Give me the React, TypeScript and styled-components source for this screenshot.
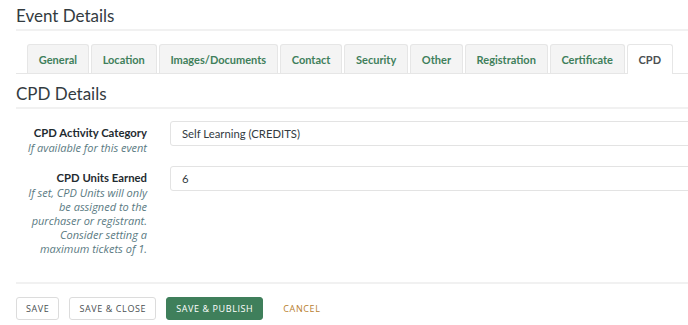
import React from "react";
import styled, { createGlobalStyle } from "styled-components";

const COLORS = {
  green: "#3f7f5b",
  text: "#333b3f",
  label: "#1f2b30",
  hint: "#5a7a82",
  line: "#f1f1f1",
  tabBg: "#f4f4f4",
  tabBorder: "#e6e6e6",
  inputBorder: "#e3e3e3",
  cancel: "#b8802f",
};

const GlobalStyle = createGlobalStyle`
  body {
    margin: 0;
    background: #ffffff;
    font-family: Lato, "Noto Sans", sans-serif;
    color: ${COLORS.text};
    overflow: hidden;
  }
`;

const Page = styled.div`
  width: 740px;
  padding: 0 0 0 16px;
  box-sizing: border-box;
`;

const SectionTitle = styled.h2<{ $top: number }>`
  margin: 0;
  font-size: 17px;
  font-weight: 400;
  line-height: 22px;
  color: ${COLORS.text};
  padding: ${(p) => p.$top}px 0 2px;
  border-bottom: 2px solid ${COLORS.line};
`;

const TabBar = styled.div`
  display: flex;
  gap: 2px;
  margin-top: 13px;
  padding-left: 11px;
  border-bottom: 1px solid ${COLORS.tabBorder};
`;

const Tab = styled.div<{ $active?: boolean }>`
  padding: 0 10.8px;
  display: flex;
  align-items: center;
  font-size: 11px;
  font-weight: 700;
  color: ${(p) => (p.$active ? "#4a4f52" : COLORS.green)};
  background: ${(p) => (p.$active ? "#ffffff" : COLORS.tabBg)};
  border: 1px solid ${COLORS.tabBorder};
  border-bottom: none;
  border-radius: 3px 3px 0 0;
  margin-bottom: ${(p) => (p.$active ? "-1px" : "0")};
  height: ${(p) => (p.$active ? "29px" : "28px")};
`;

const Form = styled.div`
  display: flex;
  flex-direction: column;
  gap: 11px;
  padding: 12px 0 26px;
  border-bottom: 2px solid ${COLORS.line};
`;

const Row = styled.div`
  display: grid;
  grid-template-columns: 131px 1fr;
  column-gap: 23px;
  align-items: start;
`;

const LabelCol = styled.div`
  text-align: right;
  padding-top: 5px;
`;

const Label = styled.div`
  font-size: 11.3px;
  font-weight: 700;
  color: ${COLORS.label};
  line-height: 14px;
`;

const Hint = styled.div`
  font-family: "Open Sans", sans-serif;
  font-size: 11px;
  font-style: italic;
  color: ${COLORS.hint};
  line-height: 14px;
  margin-top: 1px;
`;

const Field = styled.div`
  height: 25px;
  box-sizing: border-box;
  border: 1px solid ${COLORS.inputBorder};
  border-radius: 3px;
  padding: 0 11px;
  display: flex;
  align-items: center;
  font-size: 11.3px;
  color: ${COLORS.text};
`;

const Actions = styled.div`
  display: flex;
  align-items: center;
  gap: 10px;
  padding-top: 13px;
`;

const Button = styled.div<{ $variant?: "primary" | "link" }>`
  height: 23px;
  box-sizing: border-box;
  padding: 0 9px;
  display: flex;
  align-items: center;
  font-family: "Open Sans", sans-serif;
  font-size: 9px;
  letter-spacing: 0.6px;
  text-transform: uppercase;
  border-radius: 3px;
  border: 1px solid
    ${(p) =>
      p.$variant === "primary"
        ? COLORS.green
        : p.$variant === "link"
        ? "transparent"
        : "#dcdcdc"};
  background: ${(p) => (p.$variant === "primary" ? COLORS.green : "#fff")};
  color: ${(p) =>
    p.$variant === "primary"
      ? "#ffffff"
      : p.$variant === "link"
      ? COLORS.cancel
      : "#4a4f52"};
`;

const tabs = [
  "General",
  "Location",
  "Images/Documents",
  "Contact",
  "Security",
  "Other",
  "Registration",
  "Certificate",
  "CPD",
];

export default function App() {
  return (
    <>
      <GlobalStyle />
      <Page>
        <SectionTitle $top={5}>Event Details</SectionTitle>
        <TabBar>
          {tabs.map((t) => (
            <Tab key={t} $active={t === "CPD"}>
              {t}
            </Tab>
          ))}
        </TabBar>
        <SectionTitle $top={9}>CPD Details</SectionTitle>
        <Form>
          <Row>
            <LabelCol>
              <Label>CPD Activity Category</Label>
              <Hint>If available for this event</Hint>
            </LabelCol>
            <Field>Self Learning (CREDITS)</Field>
          </Row>
          <Row>
            <LabelCol>
              <Label>CPD Units Earned</Label>
              <Hint>
                If set, CPD Units will only be assigned to the purchaser or
                registrant. Consider setting a maximum tickets of 1.
              </Hint>
            </LabelCol>
            <Field>6</Field>
          </Row>
        </Form>
        <Actions>
          <Button>Save</Button>
          <Button>Save &amp; Close</Button>
          <Button $variant="primary">Save &amp; Publish</Button>
          <Button $variant="link">Cancel</Button>
        </Actions>
      </Page>
    </>
  );
}
